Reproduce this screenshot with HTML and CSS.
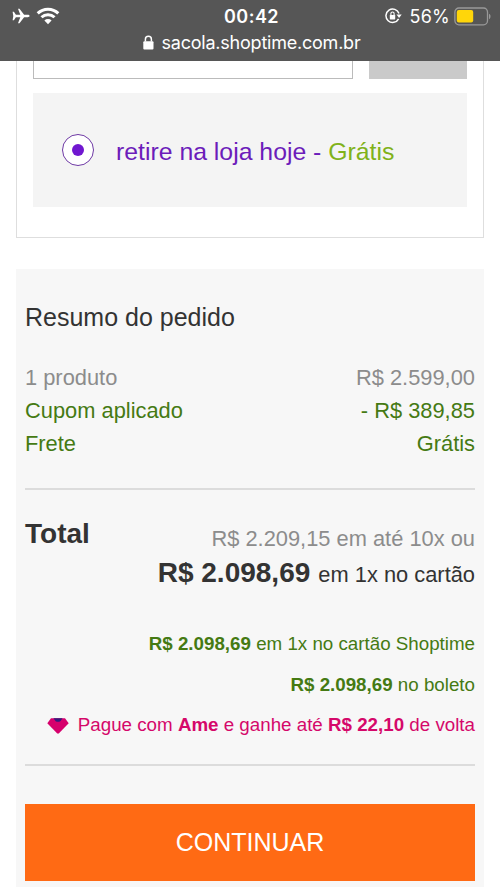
FILE: index.html
```html
<!DOCTYPE html>
<html lang="pt-BR">
<head>
<meta charset="utf-8">
<title>Shoptime - Sacola</title>
<link rel="stylesheet" href="styles.css">
</head>
<body>
<header class="browser-bar">
  <div class="status">
    <div class="status-left">
      <svg width="18" height="18" viewBox="0 0 18 18" fill="#fff"><path d="M.6 4.8h1.3l2 3h4.4L6 1.8h1.5l4.6 6h3.6c1 0 1.9.5 1.9 1.2s-.9 1.2-1.9 1.2h-3.6l-4.6 6H6l2.3-6H3.9l-2 3H.6L1.3 9z"/></svg>
      <svg width="24" height="18" viewBox="0 0 24 18" fill="none" stroke="#fff" stroke-width="3"><path d="M1.7 6.4a14.7 14.7 0 0 1 20.6 0M5.5 10.3a9.3 9.3 0 0 1 13 0"/><path d="M12 17.2 8.4 13.5a5.2 5.2 0 0 1 7.2 0z" fill="#fff" stroke="none"/></svg>
    </div>
    <time class="clock">00:42</time>
    <div class="status-right">
      <svg width="17" height="16" viewBox="0 0 17 16"><path d="M13.6 10.8A6.7 6.7 0 1 1 14 5.6" fill="none" stroke="#fff" stroke-width="1.5"/><path d="M11.5 6.5h5.2l-2.6 3.6z" fill="#fff"/><rect x="4.8" y="7" width="5.4" height="4.4" rx=".6" fill="#fff"/><path d="M5.9 7V5.6a1.6 1.6 0 0 1 3.2 0V7" fill="none" stroke="#fff" stroke-width="1.1"/></svg>
      <span class="percent">56%</span>
      <svg width="37" height="19" viewBox="0 0 37 19"><rect x=".9" y="1" width="32.6" height="16.8" rx="4" fill="none" stroke="#999" stroke-width="1.3"/><rect x="2.8" y="3" width="16.4" height="12.6" rx="2" fill="#ffd60a"/><path d="M35 6.8c2 .9 2 4.5 0 5.4z" fill="#999"/></svg>
    </div>
  </div>
  <div class="address">
    <svg width="11" height="15" viewBox="0 0 11 15"><rect x=".3" y="6.2" width="10.2" height="8.4" rx="1" fill="#fff"/><path d="M2.4 6.5V4.2a3 3 0 0 1 6 0v2.3" fill="none" stroke="#fff" stroke-width="1.5"/></svg>
    <span class="url">sacola.shoptime.com.br</span>
  </div>
</header>
<main>
  <section class="delivery">
    <div class="zip"><div class="zip-input"></div><div class="zip-button"></div></div>
    <label class="pickup"><span class="radio"></span><span class="pickup-text">retire na loja hoje - <span class="free">Grátis</span></span></label>
  </section>
  <section class="summary">
    <h2>Resumo do pedido</h2>
    <div class="row muted"><span>1 produto</span><span>R$ 2.599,00</span></div>
    <div class="row green"><span>Cupom aplicado</span><span>- R$ 389,85</span></div>
    <div class="row green"><span>Frete</span><span>Grátis</span></div>
    <div class="totals">
      <strong class="total-label">Total</strong>
      <div class="total-values">
        <div class="installments muted">R$ 2.209,15 em até 10x ou</div>
        <div class="cash"><strong>R$ 2.098,69</strong> em 1x no cartão</div>
      </div>
    </div>
    <div class="offers">
      <p class="green"><strong>R$ 2.098,69</strong> em 1x no cartão Shoptime</p>
      <p class="green"><strong>R$ 2.098,69</strong> no boleto</p>
      <p class="ame"><svg width="22" height="16" viewBox="0 0 22 16"><path d="M4 .2h14l3.7 5L12 15.3q-1 .8-2 0L.3 5.2z" fill="#d6006c"/><path d="M6.4.2h9.2l-2.3 3.1q-2.3 1-4.6 0z" fill="#331a7d"/></svg><span>Pague com <strong>Ame</strong> e ganhe até <strong>R$ 22,10</strong> de volta</span></p>
    </div>
    <button class="continue">CONTINUAR</button>
  </section>
</main>
</body>
</html>
```
FILE: styles.css
```css
* { box-sizing: border-box; }
body {
  margin: 0;
  height: 887px;
  overflow: hidden;
  background: #fff;
  color: #333;
  font-family: "Liberation Sans", Arial, sans-serif;
  font-size: 21.85px;
}
.browser-bar {
  height: 61px;
  background: #565656;
  color: #fff;
  font-family: Inter, sans-serif;
}
.status {
  display: grid;
  grid-template-columns: 1fr auto 1fr;
  align-items: center;
  height: 32px;
  padding: 0 9px 0 12px;
}
.status-left, .status-right { display: flex; align-items: center; }
.status-left { gap: 6px; }
.status-right { justify-content: flex-end; }
.clock { font-size: 18px; font-weight: 600; letter-spacing: .5px; }
.percent { margin: 0 4px 0 8px; font-size: 18px; letter-spacing: .2px; }
.address {
  display: flex;
  justify-content: center;
  align-items: center;
  gap: 8px;
  height: 20px;
  padding-left: 3px;
}
.url { font-size: 18px; letter-spacing: -.22px; }
.delivery {
  height: 177px;
  margin: 0 16px;
  padding: 0 16px;
  border: 1px solid #dedede;
  border-top: 0;
}
.zip { display: flex; gap: 16px; height: 18px; }
.zip-input { width: 320px; border: 1px solid #bbb; border-top: 0; }
.zip-button { flex: 1; background: #cacaca; }
.pickup {
  display: flex;
  align-items: center;
  gap: 22px;
  height: 114px;
  margin-top: 14px;
  padding: 0 0 0 29px;
  background: #f4f4f4;
  color: #6c1cba;
  font-size: 24.8px;
}
.radio {
  display: flex;
  align-items: center;
  justify-content: center;
  width: 32px;
  height: 32px;
  border: 1.5px solid #6f3aa5;
  border-radius: 50%;
  background: #fff;
}
.radio::after { content: ""; width: 12px; height: 12px; border-radius: 50%; background: #7017d0; }
.pickup-text { padding-top: 4px; }
.free { color: #80b21a; }
.summary {
  height: 640px;
  margin: 31px 16px 0;
  padding: 28px 9px 0;
  background: #f7f7f7;
}
h2 { margin: 0 0 24px; font-size: 25px; font-weight: 400; line-height: 40px; }
.row { display: flex; justify-content: space-between; line-height: 33px; }
.muted { color: #8c8c8c; }
.green { color: #457a13; }
.totals {
  display: flex;
  justify-content: space-between;
  height: 136px;
  margin-top: 28px;
  padding-top: 28px;
  border-top: 2px solid #dcdcdc;
}
.total-label { font-size: 28px; line-height: 32px; }
.total-values { padding-top: 4px; text-align: right; }
.installments { line-height: 33px; }
.cash { line-height: 36px; }
.cash strong { margin-right: 2px; font-size: 28px; }
.offers { height: 142px; border-bottom: 2px solid #dcdcdc; font-size: 18.75px; }
.offers p { margin: 0; line-height: 40.7px; text-align: right; }
.offers .ame { display: flex; justify-content: flex-end; align-items: center; gap: 9px; color: #d5086a; }
.continue {
  display: block;
  width: 100%;
  height: 77px;
  margin-top: 38px;
  padding: 0;
  border: 0;
  background: #ff6a14;
  color: #fff;
  font: 25px "Liberation Sans", Arial, sans-serif;
}
```
